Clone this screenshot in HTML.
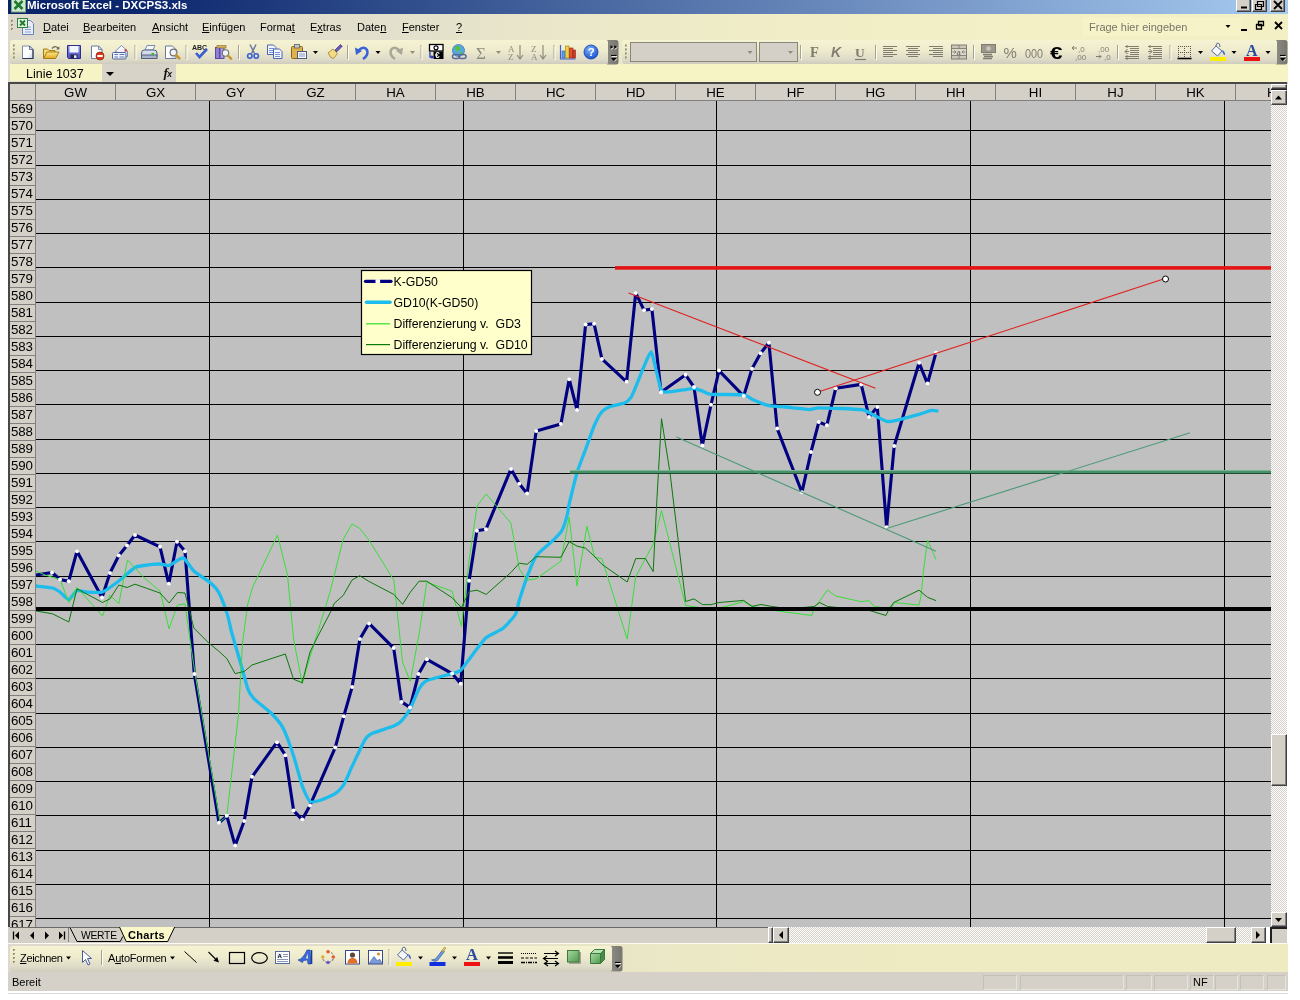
<!DOCTYPE html>
<html lang="de"><head><meta charset="utf-8"><title>Microsoft Excel - DXCPS3.xls</title>
<style>
html,body{margin:0;padding:0;background:#fff;}
body{width:1300px;height:1000px;position:relative;overflow:hidden;font-family:"Liberation Sans",Arial,sans-serif;font-size:11px;color:#000;}
#win{position:absolute;left:8px;top:0;width:1280px;height:992px;background:#d4d0c8;overflow:hidden;}
.abs{position:absolute;}
#title{position:absolute;left:8px;top:0;width:1280px;height:14px;background:linear-gradient(90deg,#0a246a 0%,#0c276d 10%,#a6caf0 100%);}
#title .t{position:absolute;left:19px;top:-1.500px;color:#fff;font-weight:bold;font-size:11.5px;white-space:nowrap;}
.tb{position:absolute;top:-3px;width:15px;height:15px;background:#d4d0c8;border:1px solid;border-color:#fff #404040 #404040 #fff;box-sizing:border-box;box-shadow:inset -1px -1px 0 #808080;}
#menubar{position:absolute;left:8px;top:14px;width:1280px;height:26px;background:linear-gradient(90deg,#dddacd 0%,#e2dfcd 28%,#edeac8 50%,#f2efc6 70%,#f3f0c5 100%);}
#menubar span{position:absolute;top:7px;font-size:11px;white-space:nowrap;}
#tbrow{position:absolute;left:8px;top:40px;width:1280px;height:24px;background:linear-gradient(90deg,#dddacd 0%,#e2dfcd 28%,#edeac8 50%,#f2efc6 70%,#f3f0c5 100%);}
.tbar{position:absolute;top:0px;height:24px;border-radius:3px 0 0 3px;background:linear-gradient(180deg,#f5f3d2 0%,#efecce 40%,#dedbc8 80%,#cfccbf 100%);}
#fbar{position:absolute;left:8px;top:64px;width:1280px;height:18px;background:#f6f3c4;}
#chrow{position:absolute;left:8px;top:82px;width:1279px;height:19px;background:#d4d0c8;border-top:2px solid #484848;box-sizing:border-box;}
.ch{position:absolute;top:84px;margin-left:1px;width:80px;height:17px;box-sizing:border-box;border-right:1px solid #808080;border-bottom:1px solid #808080;text-align:center;font-size:13.300px;line-height:17px;background:#d4d0c8;}
.rh{position:absolute;left:10px;width:26px;height:17px;box-sizing:border-box;border-right:1px solid #808080;border-bottom:1px solid #808080;font-size:13.300px;line-height:16px;text-align:left;padding-left:1px;background:#d4d0c8;overflow:hidden;letter-spacing:-0.200px;}
.dither{background-color:#e9e7e2;background-image:linear-gradient(45deg,#d4d0c8 25%,transparent 25%,transparent 75%,#d4d0c8 75%),linear-gradient(45deg,#d4d0c8 25%,#fff 25%,#fff 75%,#d4d0c8 75%);background-size:2px 2px;background-position:0 0,1px 1px;}
#vs{position:absolute;left:1271px;top:84px;width:15.500px;height:843px;}
.sbtn{position:absolute;background:#d4d0c8;border:1px solid;border-color:#fff #404040 #404040 #fff;box-sizing:border-box;box-shadow:inset -1px -1px 0 #808080;}
#tabrow{position:absolute;left:8px;top:927px;width:1280px;height:16px;background:#d4d0c8;}
#hs{position:absolute;left:789px;top:927px;width:462px;height:16px;}
#draw{position:absolute;left:8px;top:943px;width:1280px;height:29px;background:linear-gradient(90deg,#dddacd 0%,#e0ddcb 28%,#eae7c6 50%,#eeebc2 70%,#eeebc2 100%);border-top:1.500px solid #fdfcf4;box-sizing:border-box;}
#status{position:absolute;left:8px;top:972px;width:1280px;height:19px;background:#d5d1c8;}
.pn{position:absolute;top:3px;height:15px;box-sizing:border-box;border:1px solid;border-color:#c4c0b6 #e6e3dc #e6e3dc #c4c0b6;}
.tab{position:absolute;top:928px;height:15px;font-size:11px;line-height:15px;white-space:nowrap;}
</style></head><body>
<div id="root" style="position:absolute;left:0;top:0;width:1300px;height:1000px;will-change:transform">
<div id="win"></div>
<div id="title"><div class="t">Microsoft Excel - DXCPS3.xls</div>
<div class="tb" style="left:1228px"></div><div class="tb" style="left:1244px"></div><div class="tb" style="left:1262px"></div>
</div>
<div id="menubar">
<span style="left:35px"><u>D</u>atei</span><span style="left:75px"><u>B</u>earbeiten</span><span style="left:144px"><u>A</u>nsicht</span><span style="left:194px"><u>E</u>infügen</span><span style="left:252px">Forma<u>t</u></span><span style="left:302px">E<u>x</u>tras</span><span style="left:349px">Date<u>n</u></span><span style="left:394px"><u>F</u>enster</span><span style="left:448px"><u>?</u></span>
<div class="abs" style="left:1075px;top:3px;width:158px;height:19px;background:#f6f3c8"></div>
<span style="left:1081px;color:#77756a">Frage hier eingeben</span>
</div>
<div id="tbrow"><div class="tbar" style="left:2px;width:602px"></div><div class="tbar" style="left:614px;width:656px"></div></div>
<div id="fbar"><div class="abs" style="left:0;top:0;width:2px;height:18px;background:#dedbcc"></div><div class="abs" style="left:0;top:16.500px;width:168px;height:1.500px;background:#e2dfcc"></div><div class="abs" style="left:94px;top:0;width:74px;height:18px;background:#d7d3c9"></div><span class="abs" style="left:18px;top:2.500px;font-size:12.500px">Linie 1037</span></div>
<div id="chrow"></div>
<div class="ch" style="left:35px">GW</div><div class="ch" style="left:115px">GX</div><div class="ch" style="left:195px">GY</div><div class="ch" style="left:275px">GZ</div><div class="ch" style="left:355px">HA</div><div class="ch" style="left:435px">HB</div><div class="ch" style="left:515px">HC</div><div class="ch" style="left:595px">HD</div><div class="ch" style="left:675px">HE</div><div class="ch" style="left:755px">HF</div><div class="ch" style="left:835px">HG</div><div class="ch" style="left:915px">HH</div><div class="ch" style="left:995px">HI</div><div class="ch" style="left:1075px">HJ</div><div class="ch" style="left:1155px">HK</div><div class="ch" style="left:1235px">HL</div>
<div class="abs" style="left:9px;top:84px;width:27px;height:17px;background:#d4d0c8;border-right:1px solid #808080;border-bottom:1px solid #808080;box-sizing:border-box"></div>
<div class="rh" style="top:101px">569</div><div class="rh" style="top:118px">570</div><div class="rh" style="top:135px">571</div><div class="rh" style="top:152px">572</div><div class="rh" style="top:169px">573</div><div class="rh" style="top:186px">574</div><div class="rh" style="top:203px">575</div><div class="rh" style="top:220px">576</div><div class="rh" style="top:237px">577</div><div class="rh" style="top:254px">578</div><div class="rh" style="top:271px">579</div><div class="rh" style="top:288px">580</div><div class="rh" style="top:305px">581</div><div class="rh" style="top:322px">582</div><div class="rh" style="top:339px">583</div><div class="rh" style="top:356px">584</div><div class="rh" style="top:373px">585</div><div class="rh" style="top:390px">586</div><div class="rh" style="top:407px">587</div><div class="rh" style="top:424px">588</div><div class="rh" style="top:441px">589</div><div class="rh" style="top:458px">590</div><div class="rh" style="top:475px">591</div><div class="rh" style="top:492px">592</div><div class="rh" style="top:509px">593</div><div class="rh" style="top:526px">594</div><div class="rh" style="top:543px">595</div><div class="rh" style="top:560px">596</div><div class="rh" style="top:577px">597</div><div class="rh" style="top:594px">598</div><div class="rh" style="top:611px">599</div><div class="rh" style="top:628px">600</div><div class="rh" style="top:645px">601</div><div class="rh" style="top:662px">602</div><div class="rh" style="top:679px">603</div><div class="rh" style="top:696px">604</div><div class="rh" style="top:713px">605</div><div class="rh" style="top:730px">606</div><div class="rh" style="top:747px">607</div><div class="rh" style="top:764px">608</div><div class="rh" style="top:781px">609</div><div class="rh" style="top:798px">610</div><div class="rh" style="top:815px">611</div><div class="rh" style="top:832px">612</div><div class="rh" style="top:849px">613</div><div class="rh" style="top:866px">614</div><div class="rh" style="top:883px">615</div><div class="rh" style="top:900px">616</div><div class="rh" style="top:917px">617</div>
<div class="abs" style="left:8px;top:83px;width:2px;height:860px;background:#484848"></div>
<svg id="chart" width="1235" height="826" viewBox="36 101 1235 826" style="position:absolute;left:36px;top:101px" shape-rendering="auto">
<rect x="36" y="101" width="1235" height="826" fill="#c0c0c0"/>
<path d="M36 130.5H1271M36 165.5H1271M36 199.5H1271M36 233.5H1271M36 267.5H1271M36 302.5H1271M36 336.5H1271M36 370.5H1271M36 404.5H1271M36 439.5H1271M36 473.5H1271M36 507.5H1271M36 541.5H1271M36 576.5H1271M36 610.5H1271M36 644.5H1271M36 678.5H1271M36 713.5H1271M36 747.5H1271M36 781.5H1271M36 815.5H1271M36 850.5H1271M36 884.5H1271M36 918.5H1271M209.5 101V927M463.5 101V927M716.5 101V927M970.5 101V927M1224.5 101V927" stroke="#000" stroke-width="1" fill="none" shape-rendering="crispEdges"/>
<polyline points="36.0,575.0 52.0,572.5 60.0,579.5 68.8,581.2 77.0,551.2 102.0,597.5 110.0,573.0 118.8,555.5 127.0,545.5 135.0,535.0 160.0,546.8 168.8,583.8 177.0,541.8 185.0,551.2 194.3,674.1 219.0,822.8 226.8,815.8 235.1,845.6 244.2,821.0 252.0,776.8 277.0,742.2 285.3,755.2 293.6,810.6 302.2,819.6 310.0,805.4 335.2,747.6 343.8,716.2 352.1,687.1 359.9,639.0 369.0,623.4 393.7,648.1 401.5,701.9 410.0,707.4 418.6,674.1 426.9,659.3 452.2,673.6 460.7,683.7 469.1,580.7 476.9,530.8 486.0,529.2 511.0,468.9 519.3,483.7 527.1,493.6 536.2,431.0 560.9,424.1 569.2,379.2 577.0,409.9 585.6,324.6 594.1,323.8 601.9,358.9 626.6,381.8 635.7,292.9 644.1,310.3 651.9,309.0 661.0,392.2 685.6,374.8 694.0,387.0 702.3,445.5 711.0,404.7 719.0,370.6 743.7,396.1 752.0,368.8 760.6,353.2 768.9,342.8 777.2,428.6 801.9,492.3 811.0,452.0 818.8,422.1 826.9,425.2 835.7,388.3 861.2,384.4 869.0,416.9 877.3,407.0 886.6,527.3 894.2,446.0 919.1,362.8 927.5,383.6 936.0,352.7" fill="none" stroke="#000080" stroke-width="3.1" stroke-linejoin="round"/>
<path d="M36.0 586.0C37.6 586.2 50.1 587.4 52.5 588.0C54.9 588.6 58.4 590.9 60.0 592.0C61.6 593.1 67.0 599.6 68.8 599.5C70.5 599.4 75.3 591.2 77.0 590.5C78.7 589.8 83.2 591.9 85.8 592.0C88.3 592.1 99.2 593.1 102.5 592.0C105.8 590.9 115.5 583.5 118.8 581.0C122.0 578.5 132.5 569.0 135.0 567.5C137.5 566.0 141.2 565.9 143.8 565.5C146.2 565.1 157.5 564.0 160.0 564.0C162.5 564.0 167.1 565.8 168.8 565.5C170.4 565.2 175.5 561.5 177.0 560.8C178.5 560.0 182.1 557.0 183.8 558.0C185.4 559.0 191.1 568.5 193.8 571.0C196.4 573.5 207.5 580.4 210.0 582.5C212.5 584.6 217.0 589.2 218.8 592.5C220.5 595.8 226.2 610.9 227.5 615.0C228.8 619.1 230.6 628.8 232.0 633.8C233.4 638.8 239.5 659.4 241.1 665.0C242.7 670.6 246.8 686.3 248.1 689.7C249.4 693.1 251.8 696.5 254.1 698.8C256.4 701.1 268.1 710.1 271.0 713.0C273.9 715.9 280.4 723.1 282.7 727.4C285.0 731.7 291.7 750.1 293.6 756.0C295.6 761.9 300.6 781.4 302.2 785.9C303.8 790.4 308.2 800.1 310.0 801.5C311.8 802.9 317.9 801.0 320.4 800.2C322.9 799.4 332.9 795.3 335.2 793.7C337.5 792.1 342.1 787.3 343.8 784.6C345.5 781.9 350.0 770.8 352.1 766.4C354.2 762.0 362.7 743.6 364.6 740.4C366.5 737.1 368.1 735.3 371.0 733.9C373.9 732.5 390.6 727.4 393.7 726.1C396.8 724.8 399.9 722.6 401.5 720.9C403.1 719.2 408.3 712.3 410.0 709.2C411.7 706.1 416.9 692.6 418.6 689.7C420.3 686.8 423.5 682.2 426.9 680.6C430.3 679.0 448.8 674.6 452.2 673.6C455.6 672.6 459.1 671.6 460.7 670.2C462.3 668.8 466.1 663.2 468.6 660.0C471.1 656.8 482.6 640.9 486.0 637.8C489.4 634.7 499.5 631.1 502.4 628.8C505.3 626.5 513.7 617.4 515.4 614.5C517.1 611.6 518.1 604.0 519.3 600.2C520.5 596.4 525.4 581.2 527.1 576.8C528.8 572.4 533.5 559.8 536.2 556.0C538.9 552.2 551.8 541.7 554.4 539.1C557.0 536.5 560.9 532.5 562.2 530.0C563.5 527.5 566.7 517.0 567.4 514.4C568.1 511.8 568.2 508.2 569.2 504.0C570.2 499.8 575.4 478.3 577.0 472.8C578.6 467.3 583.9 454.1 585.6 449.4C587.3 444.7 592.5 429.8 594.1 426.0C595.7 422.2 600.3 413.6 601.9 411.7C603.5 409.8 608.0 407.4 610.3 406.5C612.6 405.6 622.5 404.0 624.6 403.1C626.7 402.2 629.9 399.0 631.0 397.4C632.1 395.8 634.4 390.1 635.7 387.0C637.0 383.9 642.6 369.7 644.1 366.2C645.6 362.7 649.9 351.6 651.1 351.9C652.3 352.2 654.8 365.0 655.8 368.8C656.8 372.6 660.0 387.3 661.0 389.6C662.0 391.9 663.7 392.2 666.2 392.2C668.7 392.2 682.8 390.0 685.6 389.6C688.4 389.2 692.4 388.2 694.0 388.3C695.6 388.4 700.3 390.3 702.0 390.9C703.7 391.5 706.9 393.9 711.1 394.3C715.3 394.7 739.6 394.3 743.7 394.8C747.8 395.3 749.5 398.1 752.0 399.2C754.5 400.3 765.5 404.9 768.9 405.7C772.3 406.5 781.8 406.6 785.8 407.0C789.8 407.4 805.8 409.5 809.2 409.6C812.6 409.7 814.4 407.8 819.6 407.8C824.8 407.8 856.3 409.1 861.2 409.6C866.1 410.1 867.4 411.7 869.0 412.4C870.6 413.1 875.5 416.0 877.3 416.9C879.1 417.8 884.9 420.9 886.6 421.3C888.3 421.7 891.0 421.5 894.2 420.8C897.5 420.1 915.4 415.3 919.1 414.3C922.8 413.3 929.6 410.7 931.4 410.4C933.2 410.1 936.4 410.8 937.0 410.9" fill="none" stroke="#1cbcec" stroke-width="3.3" stroke-linejoin="round" stroke-linecap="round"/>
<polyline points="36.0,571.0 45.0,575.0 60.0,579.5 68.8,602.5 77.0,587.5 102.5,616.0 110.0,595.0 118.8,603.8 127.5,560.0 143.8,577.5 160.0,591.0 169.0,628.8 177.5,605.0 185.0,603.8 190.0,640.0 195.3,675.0 220.0,822.0 226.8,816.0 230.7,782.0 238.5,714.4 242.4,644.2 247.5,605.0 252.5,587.5 277.5,535.0 287.5,575.0 293.6,639.0 302.2,683.7 310.0,657.0 330.0,592.2 343.2,539.4 352.0,524.0 359.7,528.4 368.5,539.4 393.8,580.1 402.6,662.6 410.3,681.3 419.1,634.0 426.8,582.3 452.1,591.1 461.4,626.3 469.1,560.0 477.0,506.0 486.2,494.0 510.9,523.0 519.3,569.0 527.1,580.1 536.2,578.8 560.9,561.2 569.2,517.0 577.0,585.9 586.9,526.1 594.7,557.3 601.9,558.6 627.2,639.1 635.7,576.8 645.4,558.6 653.2,544.3 661.5,510.5 685.6,605.4 702.5,608.0 719.4,608.0 726.0,606.4 743.7,601.7 752.0,606.4 778.0,611.0 811.8,615.5 814.4,607.7 819.6,601.2 827.4,590.0 835.7,596.0 861.2,601.7 869.0,600.6 874.2,606.4 886.0,608.0 892.4,606.4 894.2,602.5 919.1,605.1 921.0,596.0 923.6,570.0 927.5,540.0 936.0,559.6" fill="none" stroke="#3add3a" stroke-width="1"/>
<polyline points="36.0,611.0 52.5,613.8 68.8,622.0 77.0,588.8 102.5,602.5 110.0,598.8 118.8,585.0 127.0,587.5 135.0,584.2 160.0,593.0 169.2,603.0 177.5,592.5 185.0,593.0 193.8,628.0 208.6,642.9 218.8,651.2 226.8,658.5 235.1,673.6 244.2,671.5 252.0,665.0 285.3,654.0 293.6,679.3 302.2,682.7 310.0,652.0 317.8,636.4 330.0,613.1 334.4,603.2 343.2,595.5 352.0,580.1 359.7,575.7 368.5,581.2 393.8,594.4 402.6,604.3 410.3,592.2 419.1,581.2 426.8,581.2 452.1,597.7 461.4,607.6 469.1,591.5 477.0,590.2 486.2,594.4 510.9,572.5 519.3,563.2 527.1,564.3 536.2,556.7 560.9,557.3 569.2,541.7 577.0,546.1 585.6,548.2 594.1,556.0 601.9,564.3 627.2,582.0 635.7,558.6 645.4,558.6 653.2,571.6 657.0,497.5 661.5,418.7 670.0,472.8 685.6,601.5 694.0,598.9 702.5,604.6 711.1,604.6 719.0,602.5 743.7,600.4 752.0,606.4 761.0,604.5 771.5,606.4 790.0,609.0 814.4,606.4 819.6,602.5 827.4,606.4 850.0,609.0 869.0,610.3 885.9,615.5 888.5,610.3 893.7,602.5 919.1,590.2 927.5,597.3 936.0,600.6" fill="none" stroke="#0c780c" stroke-width="1"/>
<circle cx="52.0" cy="572.5" r="2" fill="#fff"/>
<circle cx="60.0" cy="579.5" r="2" fill="#fff"/>
<circle cx="68.8" cy="581.2" r="2" fill="#fff"/>
<circle cx="77.0" cy="551.2" r="2" fill="#fff"/>
<circle cx="102.0" cy="597.5" r="2" fill="#fff"/>
<circle cx="110.0" cy="573.0" r="2" fill="#fff"/>
<circle cx="118.8" cy="555.5" r="2" fill="#fff"/>
<circle cx="127.0" cy="545.5" r="2" fill="#fff"/>
<circle cx="135.0" cy="535.0" r="2" fill="#fff"/>
<circle cx="160.0" cy="546.8" r="2" fill="#fff"/>
<circle cx="168.8" cy="583.8" r="2" fill="#fff"/>
<circle cx="177.0" cy="541.8" r="2" fill="#fff"/>
<circle cx="185.0" cy="551.2" r="2" fill="#fff"/>
<circle cx="194.3" cy="674.1" r="2" fill="#fff"/>
<circle cx="219.0" cy="822.8" r="2" fill="#fff"/>
<circle cx="226.8" cy="815.8" r="2" fill="#fff"/>
<circle cx="235.1" cy="845.6" r="2" fill="#fff"/>
<circle cx="244.2" cy="821.0" r="2" fill="#fff"/>
<circle cx="252.0" cy="776.8" r="2" fill="#fff"/>
<circle cx="277.0" cy="742.2" r="2" fill="#fff"/>
<circle cx="285.3" cy="755.2" r="2" fill="#fff"/>
<circle cx="293.6" cy="810.6" r="2" fill="#fff"/>
<circle cx="302.2" cy="819.6" r="2" fill="#fff"/>
<circle cx="310.0" cy="805.4" r="2" fill="#fff"/>
<circle cx="335.2" cy="747.6" r="2" fill="#fff"/>
<circle cx="343.8" cy="716.2" r="2" fill="#fff"/>
<circle cx="352.1" cy="687.1" r="2" fill="#fff"/>
<circle cx="359.9" cy="639.0" r="2" fill="#fff"/>
<circle cx="369.0" cy="623.4" r="2" fill="#fff"/>
<circle cx="393.7" cy="648.1" r="2" fill="#fff"/>
<circle cx="401.5" cy="701.9" r="2" fill="#fff"/>
<circle cx="410.0" cy="707.4" r="2" fill="#fff"/>
<circle cx="418.6" cy="674.1" r="2" fill="#fff"/>
<circle cx="426.9" cy="659.3" r="2" fill="#fff"/>
<circle cx="452.2" cy="673.6" r="2" fill="#fff"/>
<circle cx="460.7" cy="683.7" r="2" fill="#fff"/>
<circle cx="469.1" cy="580.7" r="2" fill="#fff"/>
<circle cx="476.9" cy="530.8" r="2" fill="#fff"/>
<circle cx="486.0" cy="529.2" r="2" fill="#fff"/>
<circle cx="511.0" cy="468.9" r="2" fill="#fff"/>
<circle cx="519.3" cy="483.7" r="2" fill="#fff"/>
<circle cx="527.1" cy="493.6" r="2" fill="#fff"/>
<circle cx="536.2" cy="431.0" r="2" fill="#fff"/>
<circle cx="560.9" cy="424.1" r="2" fill="#fff"/>
<circle cx="569.2" cy="379.2" r="2" fill="#fff"/>
<circle cx="577.0" cy="409.9" r="2" fill="#fff"/>
<circle cx="585.6" cy="324.6" r="2" fill="#fff"/>
<circle cx="594.1" cy="323.8" r="2" fill="#fff"/>
<circle cx="601.9" cy="358.9" r="2" fill="#fff"/>
<circle cx="626.6" cy="381.8" r="2" fill="#fff"/>
<circle cx="635.7" cy="292.9" r="2" fill="#fff"/>
<circle cx="644.1" cy="310.3" r="2" fill="#fff"/>
<circle cx="651.9" cy="309.0" r="2" fill="#fff"/>
<circle cx="661.0" cy="392.2" r="2" fill="#fff"/>
<circle cx="685.6" cy="374.8" r="2" fill="#fff"/>
<circle cx="694.0" cy="387.0" r="2" fill="#fff"/>
<circle cx="702.3" cy="445.5" r="2" fill="#fff"/>
<circle cx="711.0" cy="404.7" r="2" fill="#fff"/>
<circle cx="719.0" cy="370.6" r="2" fill="#fff"/>
<circle cx="743.7" cy="396.1" r="2" fill="#fff"/>
<circle cx="752.0" cy="368.8" r="2" fill="#fff"/>
<circle cx="760.6" cy="353.2" r="2" fill="#fff"/>
<circle cx="768.9" cy="342.8" r="2" fill="#fff"/>
<circle cx="777.2" cy="428.6" r="2" fill="#fff"/>
<circle cx="801.9" cy="492.3" r="2" fill="#fff"/>
<circle cx="811.0" cy="452.0" r="2" fill="#fff"/>
<circle cx="818.8" cy="422.1" r="2" fill="#fff"/>
<circle cx="826.9" cy="425.2" r="2" fill="#fff"/>
<circle cx="835.7" cy="388.3" r="2" fill="#fff"/>
<circle cx="861.2" cy="384.4" r="2" fill="#fff"/>
<circle cx="869.0" cy="416.9" r="2" fill="#fff"/>
<circle cx="877.3" cy="407.0" r="2" fill="#fff"/>
<circle cx="886.6" cy="527.3" r="2" fill="#fff"/>
<circle cx="894.2" cy="446.0" r="2" fill="#fff"/>
<circle cx="919.1" cy="362.8" r="2" fill="#fff"/>
<circle cx="927.5" cy="383.6" r="2" fill="#fff"/>
<circle cx="936.0" cy="352.7" r="2" fill="#fff"/>
<rect x="36" y="607" width="1235" height="4" fill="#000"/>
<rect x="570" y="470.1" width="701" height="3" fill="#47916a"/><rect x="570" y="470.1" width="701" height="0.9" fill="#7fb898"/><rect x="570" y="473" width="701" height="1" fill="#1f4d31"/>
<rect x="615" y="266.1" width="656" height="3.6" fill="#e41414"/>
<path d="M628.5 292.9L875.5 388.3M817.2 392.2L1165 278.6" stroke="#e02020" stroke-width="1.1" fill="none"/>
<path d="M676.5 437.1L936 551.3M886.6 528.6L1190 432.8" stroke="#4d9a78" stroke-width="1.1" fill="none"/>
<circle cx="817.5" cy="392.3" r="3" fill="#fff" stroke="#000" stroke-width="1"/>
<circle cx="1165.5" cy="279" r="3" fill="#fff" stroke="#000" stroke-width="1"/>
<rect x="361.5" y="270.5" width="170" height="84" fill="#ffffcc" stroke="#000" stroke-width="1.2"/>
<path d="M365.5 281.3H391" stroke="#000080" stroke-width="3.2" stroke-linecap="round"/>
<rect x="375.5" y="279.3" width="4.6" height="4" fill="#fff"/>
<path d="M366.5 302.3H390" stroke="#1cbcec" stroke-width="3.6" stroke-linecap="round"/>
<path d="M366 323.8H390" stroke="#2ee02e" stroke-width="1.2"/>
<path d="M366 344.6H390" stroke="#0a7a0a" stroke-width="1.2"/>
<text x="393.5" y="285.6" font-family="Liberation Sans, Arial, sans-serif" font-size="12.3" fill="#000" xml:space="preserve">K-GD50</text>
<text x="393.5" y="306.6" font-family="Liberation Sans, Arial, sans-serif" font-size="12.3" fill="#000" xml:space="preserve">GD10(K-GD50)</text>
<text x="393.5" y="327.5" font-family="Liberation Sans, Arial, sans-serif" font-size="12.3" fill="#000" xml:space="preserve">Differenzierung v.  GD3</text>
<text x="393.5" y="348.5" font-family="Liberation Sans, Arial, sans-serif" font-size="12.3" fill="#000" xml:space="preserve">Differenzierung v.  GD10</text>
</svg>
<div id="vs" class="dither"></div>
<div class="sbtn" style="left:1271px;top:84px;width:15.500px;height:5px"></div><div class="abs" style="left:1271px;top:89px;width:15.500px;height:1px;background:#202020"></div>
<div class="sbtn" style="left:1271px;top:90px;width:15.500px;height:15px"></div>
<div class="sbtn" style="left:1271px;top:734px;width:15.500px;height:52px"></div>
<div class="sbtn" style="left:1271px;top:912px;width:15.500px;height:15px"></div>
<div id="tabrow"></div>
<div class="abs" style="left:68px;top:927px;width:1px;height:15px;background:#808080"></div>
<div class="abs" style="left:10px;top:927px;width:758px;height:1px;background:#6a6a66"></div>
<svg class="abs" style="left:68px;top:927px" width="112" height="16" viewBox="68 927 112 16"><path d="M70 927.500l7 14h43.300l2.500 -5" fill="#d4d0c8" stroke="#000" stroke-width="1"/><path d="M119.500 927l6.700 14.500h41.500l7 -14.500z" fill="#faf7c8" stroke="none"/><path d="M119.500 927l6.700 14.500h41.500l7 -14.500" fill="none" stroke="#000" stroke-width="1"/></svg>
<div class="tab" style="left:81px;font-size:10.300px;letter-spacing:-0.250px">WERTE</div><div class="tab" style="left:128px;font-weight:bold;letter-spacing:0.350px">Charts</div>
<div class="sbtn" style="left:768px;top:927px;width:5px;height:16px"></div>
<div class="sbtn" style="left:773px;top:927px;width:16px;height:16px"></div>
<div id="hs" class="dither"></div>
<div class="sbtn" style="left:1206px;top:927px;width:30px;height:16px"></div>
<div class="sbtn" style="left:1251px;top:927px;width:15px;height:16px"></div>
<div class="abs" style="left:1266px;top:927px;width:4px;height:16px;background:#fff"></div>
<div class="abs" style="left:1270px;top:927px;width:1.500px;height:16px;background:#202020"></div>
<div class="abs" style="left:1271px;top:927px;width:16px;height:1.500px;background:#202020"></div>
<div id="draw"><div class="tbar" style="left:2px;top:2px;width:602px;height:26px"></div>
<span class="abs" style="left:12px;top:8px;letter-spacing:-0.350px"><u>Z</u>eichnen</span><span class="abs" style="left:100px;top:8px;letter-spacing:-0.200px">A<u>u</u>toFormen</span></div>
<div id="status"><span class="abs" style="left:4px;top:4px">Bereit</span>
<div class="pn" style="left:975px;width:34px"></div><div class="pn" style="left:1011.5px;width:104px"></div><div class="pn" style="left:1118px;width:25.5px"></div><div class="pn" style="left:1146px;width:34px"></div><div class="pn" style="left:1181.5px;width:24px"></div><div class="pn" style="left:1207px;width:23px"></div><div class="pn" style="left:1232px;width:24px"></div><div class="pn" style="left:1259px;width:19px"></div>
<span class="abs" style="left:1185px;top:4px">NF</span></div>
<div class="abs" style="left:0;top:991px;width:1300px;height:9px;background:#fff"></div>
<div class="abs" style="left:8px;top:992.500px;width:1280px;height:1px;background:#dcdad4"></div>
<div class="abs" style="left:1288px;top:0;width:12px;height:1000px;background:#fff"></div>
<div class="abs" style="left:1286.500px;top:84px;width:2px;height:859px;background:#fff"></div>
<svg id="icons" width="1300" height="1000" viewBox="0 0 1300 1000" style="position:absolute;left:0;top:0;pointer-events:none"><defs><linearGradient id="gpage" x1="0" y1="0" x2="1" y2="1"><stop offset="0" stop-color="#fff"/><stop offset="0.6" stop-color="#fdfdff"/><stop offset="1" stop-color="#c4cde6"/></linearGradient><linearGradient id="gfold" x1="0" y1="0" x2="0" y2="1"><stop offset="0" stop-color="#ffe98a"/><stop offset="1" stop-color="#e3a721"/></linearGradient><linearGradient id="gblue" x1="0" y1="0" x2="0" y2="1"><stop offset="0" stop-color="#8a92e6"/><stop offset="1" stop-color="#4a50c0"/></linearGradient><linearGradient id="ggreen" x1="0" y1="0" x2="1" y2="1"><stop offset="0" stop-color="#a8d8a0"/><stop offset="1" stop-color="#4f9a4f"/></linearGradient><radialGradient id="ghelp" cx="0.4" cy="0.3" r="0.8"><stop offset="0" stop-color="#7fb0ff"/><stop offset="1" stop-color="#1048c8"/></radialGradient><linearGradient id="gopt" x1="0" y1="0" x2="1" y2="0"><stop offset="0" stop-color="#8c8c84"/><stop offset="1" stop-color="#76766e"/></linearGradient></defs><g transform="translate(11.5,1.0)"><rect x="0" y="-3" width="14" height="14" fill="#cfe8cf" stroke="#7aa87a"/><path d="M3 0l8 8M11 0l-8 8" stroke="#1f7a2f" stroke-width="2.6"/></g><path d="M1241 7.5h6" stroke="#000" stroke-width="2"/><path d="M1257.5 1.5h6v5h-6zM1255.5 4.5h6v5h-6z" fill="#d4d0c8" stroke="#000" stroke-width="1.2"/><path d="M1274 1l8 8M1282 1l-8 8" stroke="#000" stroke-width="1.8"/><g transform="translate(11.0,20.0)"><rect x="0" y="0" width="2" height="2" fill="#8f8962"/><rect x="1" y="1" width="1" height="1" fill="#fffbe0" opacity=".6"/><rect x="0" y="4" width="2" height="2" fill="#8f8962"/><rect x="1" y="5" width="1" height="1" fill="#fffbe0" opacity=".6"/><rect x="0" y="8" width="2" height="2" fill="#8f8962"/><rect x="1" y="9" width="1" height="1" fill="#fffbe0" opacity=".6"/></g><g transform="translate(17.0,17.0)"><path d="M5.5 3.5h8l3 3v11h-11z" fill="#e6ecfa" stroke="#6d83b8"/><path d="M8 10h6M8 12.5h6M8 15h6" stroke="#8ea2d2" stroke-width="1"/><rect x="0.5" y="1.500" width="10" height="9" fill="#e3f3e0" stroke="#2f7f3f"/><path d="M3 3.500l5 5M8 3.500l-5 5" stroke="#1f7a2f" stroke-width="1.8"/></g><path d="M1225.5 25.0h5l-2.5 3z" fill="#000"/><path d="M1241 30h6" stroke="#000" stroke-width="2"/><path d="M1258.500 21.500h5v4h-5zM1256.500 24.500h5v4.500h-5z" fill="#f3f0c4" stroke="#000" stroke-width="1.300"/><path d="M1275 22l7 7M1282 22l-7 7" stroke="#000" stroke-width="1.800"/><g transform="translate(13.0,44.5)"><rect x="0" y="0" width="2" height="2" fill="#8f8962"/><rect x="1" y="1" width="1" height="1" fill="#fffbe0" opacity=".6"/><rect x="0" y="4" width="2" height="2" fill="#8f8962"/><rect x="1" y="5" width="1" height="1" fill="#fffbe0" opacity=".6"/><rect x="0" y="8" width="2" height="2" fill="#8f8962"/><rect x="1" y="9" width="1" height="1" fill="#fffbe0" opacity=".6"/><rect x="0" y="12" width="2" height="2" fill="#8f8962"/><rect x="1" y="13" width="1" height="1" fill="#fffbe0" opacity=".6"/></g><g transform="translate(22.0,45.5)"><path d="M0.5 0.500h7l3.500 3.500v9h-10.500z" fill="url(#gpage)" stroke="#7a88a8"/><path d="M0.500 13h10.500v-9" fill="none" stroke="#2a3350" stroke-width="1.100"/><path d="M7.500 0.500v3.500h3.500z" fill="#dfe6f5" stroke="#4a5878" stroke-width=".8"/></g><g transform="translate(43.0,45.0)"><path d="M9 3.500q3 -3.500 6 -0.500" stroke="#6a6a5a" fill="none" stroke-width="1.200"/><path d="M16.300 1.200v3.300h-3.300z" fill="#6a6a5a"/><path d="M0.500 13.500v-9.500h4l1.500 1.500h6v2.500" fill="#f5d977" stroke="#a57a14"/><path d="M0.500 13.500l3.500 -6.500h12l-3.500 6.500z" fill="url(#gfold)" stroke="#a57a14"/></g><g transform="translate(67.0,45.0)"><path d="M0.500 0.500h13v13h-12l-1 -1z" fill="url(#gblue)" stroke="#2c2f8a"/><rect x="2.500" y="1" width="9" height="6.500" fill="#f4f6ff"/><rect x="3.500" y="9.500" width="7" height="4" fill="#26264e"/><rect x="7" y="10.300" width="2.500" height="2.700" fill="#e8e8f0"/></g><g transform="translate(91.0,45.5)"><path d="M0.500 0.500h7l3.500 3.500v9h-10.500z" fill="url(#gpage)" stroke="#6b7a9a"/><path d="M7.500 0.500v3.500h3.500z" fill="#dfe6f5" stroke="#6b7a9a" stroke-width=".8"/><circle cx="9" cy="10.500" r="4" fill="#d83a1c" stroke="#9a2410" stroke-width=".8"/><rect x="6.300" y="9.500" width="5.400" height="2" fill="#fff"/></g><g transform="translate(112.0,44.5)"><path d="M3.500 6.500l6 -5.500l6 5.500v5.500h-12z" fill="#f4f6fc" stroke="#7f8fb8"/><path d="M3.500 6.500l6 3.500l6 -3.500" fill="none" stroke="#9aa8c8" stroke-width=".8"/><rect x="12.500" y="4.800" width="2.200" height="2.200" fill="#d83030"/><rect x="0.500" y="8" width="13.500" height="6.500" rx="1" fill="#eef2fb" stroke="#4e6496"/><path d="M2.500 10h3.500M2.500 12.500h3.500M7.500 10h5M7.500 12.500h5" stroke="#5f78b4" stroke-width="1.100"/></g><path d="M135.0 45V59" stroke="#a6a28c" stroke-width="1"/><path d="M136.0 46V60" stroke="#fffef4" stroke-width="1"/><g transform="translate(141.0,45.0)"><path d="M4 5l2 -4.500h8l-2 4.500z" fill="#f5f7fc" stroke="#7d8aa8"/><path d="M0.500 8q0 -3 3 -3h9.500q3 0 3 3v4h-15.500z" fill="#d5dbea" stroke="#55607e"/><rect x="0.500" y="10" width="15.500" height="3.500" fill="#aab3cc" stroke="#55607e"/><rect x="10.500" y="8" width="2.500" height="2" fill="#25c025"/></g><g transform="translate(165.0,45.5)"><path d="M0.500 0.500h7l3.500 3.500v9h-10.500z" fill="url(#gpage)" stroke="#6b7a9a"/><circle cx="8.500" cy="7" r="3.400" fill="#eef3ff" fill-opacity=".85" stroke="#707070" stroke-width="1.200"/><path d="M11.200 9.800l3 3" stroke="#c8962e" stroke-width="2.800" stroke-linecap="round"/></g><path d="M186.0 45V59" stroke="#a6a28c" stroke-width="1"/><path d="M187.0 46V60" stroke="#fffef4" stroke-width="1"/><g transform="translate(192.0,43.0)"><text x="0" y="6.500" font-family="Liberation Sans,Arial,sans-serif" font-size="7" font-weight="bold" fill="#222" textLength="15">ABC</text><path d="M4 10l3.500 4l7.500 -8" stroke="#3a5fd0" stroke-width="2.600" fill="none"/></g><g transform="translate(215.0,45.0)"><rect x="0.500" y="2.500" width="4" height="11" fill="#8f7fd8" stroke="#5a4aa0"/><rect x="5" y="1.500" width="4" height="12" fill="#a79be6" stroke="#5a4aa0"/><rect x="2" y="0.500" width="9" height="2.500" fill="#d8b060" stroke="#8a6a20" stroke-width=".6"/><circle cx="10.500" cy="8" r="3.200" fill="#eef4ff" stroke="#707070" stroke-width="1.100"/><path d="M13 10.700l3 3" stroke="#c8962e" stroke-width="2.600" stroke-linecap="round"/></g><path d="M238.5 45V59" stroke="#a6a28c" stroke-width="1"/><path d="M239.5 46V60" stroke="#fffef4" stroke-width="1"/><g transform="translate(247.0,44.5)"><path d="M3 0l4.500 9M9 0l-4.500 9" stroke="#6a7a9a" stroke-width="1.500"/><circle cx="2.800" cy="11.500" r="2.200" fill="none" stroke="#3a5fd0" stroke-width="1.600"/><circle cx="9.200" cy="11.500" r="2.200" fill="none" stroke="#3a5fd0" stroke-width="1.600"/></g><g transform="translate(267.0,44.5)"><path d="M0.500 0.500h6l2.500 2.500v7h-8.500z" fill="#f4f7ff" stroke="#4a64b0"/><path d="M2 4h5M2 6h5M2 8h5" stroke="#6a84d0" stroke-width=".9"/><path d="M6.500 4.500h6l2.500 2.500v7h-8.500z" fill="#f4f7ff" stroke="#4a64b0"/><path d="M8 8h5M8 10h5M8 12h5" stroke="#6a84d0" stroke-width=".9"/></g><g transform="translate(291.0,44.0)"><rect x="0.500" y="2.500" width="11" height="12" rx="1" fill="#e0b24a" stroke="#8a6518"/><rect x="3.500" y="0.500" width="5" height="3.500" fill="#c8c8c8" stroke="#606060" stroke-width=".8"/><rect x="6.500" y="7.500" width="9" height="7" fill="#f4f7ff" stroke="#4a5a80"/><path d="M8 10h6M8 12h6" stroke="#7a8ab0" stroke-width=".9"/></g><path d="M313.0 51.0h5l-2.5 3z" fill="#000"/><g transform="translate(326.0,44.0)"><path d="M9 6l5.500 -5.500l1.800 1.800l-5.500 5.500z" fill="#6a5ab8" stroke="#3a2a80" stroke-width=".7"/><path d="M2 9l5 -4l4.500 4.500l-4 5q-3 0 -5.500 -5.500z" fill="#f2dc86" stroke="#a08830" stroke-width=".9"/></g><path d="M347.5 45V59" stroke="#a6a28c" stroke-width="1"/><path d="M348.5 46V60" stroke="#fffef4" stroke-width="1"/><g transform="translate(355.0,45.0)"><path d="M3 6q6 -6 9 -1q2 5 -4 9" stroke="#3a62d8" stroke-width="2.600" fill="none"/><path d="M0 2.500l1 7.500l6 -4z" fill="#3a62d8"/></g><path d="M375.5 51.0h5l-2.5 3z" fill="#000"/><g transform="translate(389.0,45.0)"><path d="M11 6q-6 -6 -9 -1q-2 5 4 9" stroke="#aaa798" stroke-width="2.600" fill="none"/><path d="M14 2.500l-1 7.500l-6 -4z" fill="#aaa798"/></g><path d="M410.0 51.0h5l-2.5 3z" fill="#8f8c7e"/><path d="M421.0 45V59" stroke="#a6a28c" stroke-width="1"/><path d="M422.0 46V60" stroke="#fffef4" stroke-width="1"/><g transform="translate(428.0,44.0)"><rect x="1.500" y="0.500" width="13.500" height="6.500" fill="#fff" stroke="#000" stroke-width="1.300"/><circle cx="8" cy="3.800" r="2" fill="none" stroke="#000" stroke-width="1.200"/><rect x="5.500" y="7.500" width="10" height="7.500" fill="#000"/><text x="7" y="14.300" font-family="Liberation Sans,Arial,sans-serif" font-size="8.500" font-weight="bold" fill="#fff">€</text><path d="M2 8v5h2" stroke="#2030c0" stroke-width="1.300" fill="none"/><path d="M3.500 11l2.500 2l-2.500 2z" fill="#2030c0"/></g><g transform="translate(451.0,44.0)"><circle cx="7.500" cy="6.500" r="6" fill="#58a8e0" stroke="#3a78b8" stroke-width=".8"/><path d="M4 3q3 -2 5 0q1 3 -2 4q-3 1 -3 -4z" fill="#58c040"/><path d="M9 8q3 0 3 2l-3 1z" fill="#58c040"/><rect x="1.500" y="10.500" width="7" height="4" rx="2" fill="none" stroke="#5a6a9a" stroke-width="1.500"/><rect x="8" y="10.500" width="7" height="4" rx="2" fill="none" stroke="#5a6a9a" stroke-width="1.500"/></g><text x="476" y="58.500" font-family="Liberation Serif,serif" font-size="17" fill="#8f8c7e">Σ</text><path d="M496.0 51.0h5l-2.5 3z" fill="#8f8c7e"/><text x="508" y="51.500" font-family="Liberation Serif,serif" font-size="9" fill="#8f8c7e">A</text><text x="508" y="60" font-family="Liberation Serif,serif" font-size="9" fill="#8f8c7e">Z</text><path d="M520 45v13M517 55l3 4l3 -4" stroke="#8f8c7e" stroke-width="1.200" fill="none"/><text x="531" y="51.500" font-family="Liberation Serif,serif" font-size="9" fill="#8f8c7e">Z</text><text x="531" y="60" font-family="Liberation Serif,serif" font-size="9" fill="#8f8c7e">A</text><path d="M543 45v13M540 55l3 4l3 -4" stroke="#8f8c7e" stroke-width="1.200" fill="none"/><path d="M554.0 45V59" stroke="#a6a28c" stroke-width="1"/><path d="M555.0 46V60" stroke="#fffef4" stroke-width="1"/><g transform="translate(560.0,44.0)"><path d="M0.500 1v14h15" stroke="#3a62d8" stroke-width="1.200" fill="none"/><rect x="2" y="7" width="3" height="7" fill="#58a0f0" stroke="#2a60b0" stroke-width=".6"/><rect x="5.500" y="2" width="3.500" height="12" fill="#f0d040" stroke="#a08010" stroke-width=".6"/><rect x="9.500" y="4" width="3.500" height="10" fill="#e05030" stroke="#902010" stroke-width=".6"/><rect x="13" y="6" width="2.500" height="8" fill="#d04028" stroke="#902010" stroke-width=".6"/></g><g transform="translate(584.0,45.0)"><circle cx="7" cy="7" r="7" fill="url(#ghelp)" stroke="#0a3aa8" stroke-width=".8"/><text x="3.800" y="11.300" font-family="Liberation Sans,Arial,sans-serif" font-size="11.500" font-weight="bold" fill="#fff">?</text></g><path d="M606.5 40.0h9.500q2.500 0 2.500 2.500v19.5q0 2.500 -2.500 2.500h-9.500q1.500 -0.500 1.500 -2v-20.5q0 -1.500 -1.500 -2z" fill="url(#gopt)"/><path d="M610.5 45.2l2.600 1.800l-2.600 1.800zM614.3 45.2l2.600 1.800l-2.600 1.800z" fill="#000"/><path d="M611.0 49.4l2.600 -1.800M614.8 49.4l2.600 -1.800" stroke="#fff" stroke-width=".8" fill="none"/><path d="M611.5 56.5h5.500" stroke="#fff" stroke-width="1"/><path d="M611.0 55.5h5.500" stroke="#000" stroke-width="1.200"/><path d="M611.0 58.0h5.500l-2.750 3z" fill="#000"/><path d="M614.5 61.3l2.400 -2.600" stroke="#fff" stroke-width=".8"/><g transform="translate(625.0,44.5)"><rect x="0" y="0" width="2" height="2" fill="#8f8962"/><rect x="1" y="1" width="1" height="1" fill="#fffbe0" opacity=".6"/><rect x="0" y="4" width="2" height="2" fill="#8f8962"/><rect x="1" y="5" width="1" height="1" fill="#fffbe0" opacity=".6"/><rect x="0" y="8" width="2" height="2" fill="#8f8962"/><rect x="1" y="9" width="1" height="1" fill="#fffbe0" opacity=".6"/><rect x="0" y="12" width="2" height="2" fill="#8f8962"/><rect x="1" y="13" width="1" height="1" fill="#fffbe0" opacity=".6"/></g><rect x="630.500" y="42.500" width="126" height="19" fill="#d4d0c8" stroke="#8a8778"/><path d="M747.5 51.0h5l-2.5 3z" fill="#8f8c7e"/><rect x="759.500" y="42.500" width="38" height="19" fill="#d4d0c8" stroke="#8a8778"/><path d="M788.0 51.0h5l-2.5 3z" fill="#8f8c7e"/><path d="M800.5 45V59" stroke="#a6a28c" stroke-width="1"/><path d="M801.5 46V60" stroke="#fffef4" stroke-width="1"/><text x="810" y="57" font-family="Liberation Serif,serif" font-size="14.500" font-weight="bold" fill="#807d70">F</text><text x="831" y="57" font-family="Liberation Sans,Arial,sans-serif" font-size="14" font-weight="bold" font-style="italic" fill="#807d70">K</text><text x="855" y="56.500" font-family="Liberation Serif,serif" font-size="13.500" font-weight="bold" fill="#807d70">U</text><path d="M855 59.500h11" stroke="#807d70" stroke-width="1.200"/><path d="M875.5 45V59" stroke="#a6a28c" stroke-width="1"/><path d="M876.5 46V60" stroke="#fffef4" stroke-width="1"/><path d="M883.0 46.5h14M883.0 48.5h10M883.0 50.5h14M883.0 52.5h10M883.0 54.5h14M883.0 56.5h10" stroke="#807d70" stroke-width="1.100"/><path d="M906.0 46.5h14M908.0 48.5h10M906.0 50.5h14M908.0 52.5h10M906.0 54.5h14M908.0 56.5h10" stroke="#807d70" stroke-width="1.100"/><path d="M929.0 46.5h14M933.0 48.5h10M929.0 50.5h14M933.0 52.5h10M929.0 54.5h14M933.0 56.5h10" stroke="#807d70" stroke-width="1.100"/><g transform="translate(951.0,44.5)"><rect x="0.500" y="0.500" width="15" height="14" fill="#c9c6ba" stroke="#807d70"/><rect x="1" y="4.500" width="14" height="6" fill="#dcd9cc"/><path d="M0.500 4h15M0.500 11h15M8 0.500v3.500M8 11v3.500" stroke="#807d70" stroke-width=".9"/><text x="5.600" y="10.300" font-family="Liberation Serif,serif" font-size="8.500" font-weight="bold" fill="#807d70">a</text><path d="M1.500 7.500h3.500M11 7.500h3.500M3.500 6l1.500 1.500l-1.500 1.500M12.500 6l-1.500 1.500l1.500 1.500" stroke="#807d70" stroke-width=".9" fill="none"/></g><path d="M973.5 45V59" stroke="#a6a28c" stroke-width="1"/><path d="M974.5 46V60" stroke="#fffef4" stroke-width="1"/><g transform="translate(980.0,44.0)"><rect x="1.500" y="0.500" width="14" height="8" fill="#9c998c" stroke="#807d70"/><circle cx="8.500" cy="4.500" r="2.300" fill="#c9c6ba"/><path d="M3 10.500h9M4 12.500h9M3 14.500h9" stroke="#807d70" stroke-width="1.300"/></g><text x="1003.500" y="57.500" font-family="Liberation Sans,Arial,sans-serif" font-size="15" fill="#807d70">%</text><text x="1025" y="57.500" font-family="Liberation Sans,Arial,sans-serif" font-size="12.500" fill="#807d70" textLength="18" lengthAdjust="spacingAndGlyphs">000</text><text x="1050" y="58.500" font-family="Liberation Sans,Arial,sans-serif" font-size="16.500" font-weight="bold" fill="#000" textLength="12.500" lengthAdjust="spacingAndGlyphs">€</text><text x="1078" y="51.500" font-family="Liberation Sans,Arial,sans-serif" font-size="8" fill="#807d70">,0</text><text x="1075" y="60" font-family="Liberation Sans,Arial,sans-serif" font-size="8" fill="#807d70">,00</text><path d="M1077 48h-5M1074 46l-2 2l2 2" stroke="#807d70" stroke-width="1" fill="none"/><text x="1098" y="51.500" font-family="Liberation Sans,Arial,sans-serif" font-size="8" fill="#807d70">,00</text><text x="1104" y="60" font-family="Liberation Sans,Arial,sans-serif" font-size="8" fill="#807d70">,0</text><path d="M1096 56.500h5M1099 54.500l2 2l-2 2" stroke="#807d70" stroke-width="1" fill="none"/><path d="M1117.5 45V59" stroke="#a6a28c" stroke-width="1"/><path d="M1118.5 46V60" stroke="#fffef4" stroke-width="1"/><path d="M1125 46.5h14M1130 48.5h9M1130 50.5h9M1130 52.5h9M1130 54.5h9M1125 56.5h14M1125 58.5h14" stroke="#807d70" stroke-width="1"/><path d="M1129 51.500h-4M1127 49.500l-2 2l2 2" stroke="#807d70" fill="none"/><path d="M1127 45v16" stroke="#807d70" stroke-width="1" stroke-dasharray="1 1"/><path d="M1148 46.5h14M1153 48.5h9M1153 50.5h9M1153 52.5h9M1153 54.5h9M1148 56.5h14M1148 58.5h14" stroke="#807d70" stroke-width="1"/><path d="M1148 51.500h4M1150 49.500l2 2l-2 2" stroke="#807d70" fill="none"/><path d="M1150 45v16" stroke="#807d70" stroke-width="1" stroke-dasharray="1 1"/><path d="M1170.0 45V59" stroke="#a6a28c" stroke-width="1"/><path d="M1171.0 46V60" stroke="#fffef4" stroke-width="1"/><path d="M1178 46.500h13M1178 52.500h13M1178.500 46v12M1184.500 46v12M1190.500 46v12" stroke="#55534a" stroke-width="1" stroke-dasharray="1 1"/><path d="M1177.500 58.500h14" stroke="#000" stroke-width="1.600"/><path d="M1198.0 51.0h5l-2.5 3z" fill="#000"/><g transform="translate(1210.0,43.0)"><path d="M6 3l6 5l-4.500 5l-6 -5z" fill="#f4f8ff" stroke="#5a6a98" stroke-width="1"/><path d="M6 3q0 -3 2 -3q2 0 2 4" stroke="#5a6a98" fill="none"/><path d="M12 7q3 1 3 5q-2 0 -3 -5z" fill="#3a62d8"/><rect x="0" y="14" width="16" height="4" fill="#ffee00"/></g><path d="M1231.5 51.0h5l-2.5 3z" fill="#000"/><g transform="translate(1244.0,43.0)"><text x="2" y="12.500" font-family="Liberation Serif,serif" font-size="16" font-weight="bold" fill="#2a4aa0">A</text><rect x="0" y="14" width="16" height="4" fill="#ee1111"/></g><path d="M1265.5 51.0h5l-2.5 3z" fill="#000"/><path d="M1275.5 40.0h9.500q2.500 0 2.500 2.500v19.5q0 2.500 -2.500 2.500h-9.500q1.500 -0.500 1.500 -2v-20.5q0 -1.500 -1.500 -2z" fill="url(#gopt)"/><path d="M1280.5 56.5h5.500" stroke="#fff" stroke-width="1"/><path d="M1280.0 55.5h5.500" stroke="#000" stroke-width="1.200"/><path d="M1280.0 58.0h5.500l-2.750 3z" fill="#000"/><path d="M1283.5 61.3l2.400 -2.600" stroke="#fff" stroke-width=".8"/><path d="M106 72h8l-4 4z" fill="#000"/><text x="163.500" y="77.300" font-family="Liberation Serif,serif" font-size="13.500" font-style="italic" font-weight="bold" fill="#111">f</text><text x="167.300" y="77.300" font-family="Liberation Sans,Arial,sans-serif" font-size="8.500" font-style="italic" font-weight="bold" fill="#111">x</text><path d="M1275 99.500h7l-3.500 -4z" fill="#000"/><path d="M1275 918h7l-3.500 4z" fill="#000"/><path d="M783 931v8l-4 -4z" fill="#000"/><path d="M1256 931v8l4 -4z" fill="#000"/><path d="M13.500 931.500v8" stroke="#000" stroke-width="1.300"/><path d="M19 931.500v8l-4 -4z" fill="#000"/><path d="M34 931.500v8l-4 -4z" fill="#000"/><path d="M45 931.500v8l4 -4z" fill="#000"/><path d="M59 931.500v8l4 -4z" fill="#000"/><path d="M64.500 931.500v8" stroke="#000" stroke-width="1.300"/><g transform="translate(13.0,949.0)"><rect x="0" y="0" width="2" height="2" fill="#8f8962"/><rect x="1" y="1" width="1" height="1" fill="#fffbe0" opacity=".6"/><rect x="0" y="4" width="2" height="2" fill="#8f8962"/><rect x="1" y="5" width="1" height="1" fill="#fffbe0" opacity=".6"/><rect x="0" y="8" width="2" height="2" fill="#8f8962"/><rect x="1" y="9" width="1" height="1" fill="#fffbe0" opacity=".6"/><rect x="0" y="12" width="2" height="2" fill="#8f8962"/><rect x="1" y="13" width="1" height="1" fill="#fffbe0" opacity=".6"/></g><path d="M66.0 956.5h5l-2.5 3z" fill="#000"/><g transform="translate(81.0,950.0)"><path d="M1.500 0.500v12l3 -3l2.500 5.500l2 -1l-2.500 -5.500h4z" fill="#fff" stroke="#4a5a9a" stroke-width="1"/></g><path d="M101.5 950V965" stroke="#a6a28c" stroke-width="1"/><path d="M102.5 951V966" stroke="#fffef4" stroke-width="1"/><path d="M170.0 956.5h5l-2.5 3z" fill="#000"/><path d="M184.500 951.500l12 11" stroke="#000" stroke-width="1"/><path d="M208.500 952l8 8" stroke="#000" stroke-width="1.100"/><path d="M219 962.500l-5.500 -1.800l3.700 -3.700z" fill="#000"/><rect x="229.500" y="952.500" width="15" height="11" fill="none" stroke="#000" stroke-width="1.200"/><ellipse cx="259.500" cy="958" rx="7.800" ry="5.400" fill="none" stroke="#000" stroke-width="1.200"/><g transform="translate(275.0,951.0)"><rect x="0.500" y="0.500" width="14" height="12" fill="#fff" stroke="#5a6a98"/><rect x="2" y="2" width="5" height="5" fill="#e6ecfa"/><text x="2.500" y="6.800" font-family="Liberation Sans,Arial,sans-serif" font-size="6" font-weight="bold" fill="#000">A</text><path d="M8 3.500h5M8 5.500h5M2 8.500h11M2 10.500h11" stroke="#7a8ab0" stroke-width=".9"/></g><g transform="translate(298.0,949.0)"><path d="M0 11q5 -1 9 -10l3 0l1 14l-3 0l-.5 -4l-4 .5l-1 2z" fill="#3a6ad8" stroke="#1a3a98" stroke-width=".6"/><path d="M8 9.500l1.500 -5l.5 5z" fill="#efecc2"/><path d="M13.500 1v14" stroke="#1a3a98" stroke-width="1.600"/></g><g transform="translate(321.0,950.0)"><path d="M7 1.500a5.500 5.500 0 1 1 -5.500 5.500" fill="none" stroke="#5a5a5a" stroke-width="1" stroke-dasharray="2 1.500"/><circle cx="7" cy="1.800" r="1.800" fill="#e06030"/><circle cx="12.300" cy="7" r="1.800" fill="#e06030"/><circle cx="7" cy="12.500" r="1.800" fill="#6a5ac8"/><circle cx="1.800" cy="7" r="1.800" fill="#e0b030"/></g><g transform="translate(345.0,950.0)"><rect x="0.500" y="0.500" width="14" height="13.500" fill="#fff" stroke="#3a4a88"/><circle cx="7.500" cy="5" r="2.600" fill="#5a4a3a"/><path d="M2.500 13.500q0 -5.500 5 -5.500q5 0 5 5.500z" fill="#e0702a"/></g><g transform="translate(368.0,950.0)"><rect x="0.500" y="0.500" width="14" height="13.500" fill="#fff" stroke="#3a4a88"/><circle cx="10.500" cy="4" r="1.600" fill="#e08a2a"/><path d="M1 13.500l5 -7l3.500 4.500l2 -2l3 4.500z" fill="#7a9ad8" stroke="#3a5a98" stroke-width=".6"/></g><path d="M389.0 949V965" stroke="#a6a28c" stroke-width="1"/><path d="M390.0 950V966" stroke="#fffef4" stroke-width="1"/><g transform="translate(396.0,947.0)"><path d="M6 3l6 5l-4.500 5l-6 -5z" fill="#f4f8ff" stroke="#5a6a98" stroke-width="1"/><path d="M6 3q0 -3 2 -3q2 0 2 4" stroke="#5a6a98" fill="none"/><path d="M12 7q3 1 3 5q-2 0 -3 -5z" fill="#3a62d8"/><rect x="0" y="15" width="16" height="4" fill="#ffee00"/></g><path d="M418.0 956.5h5l-2.5 3z" fill="#000"/><g transform="translate(429.5,947.0)"><path d="M2 13l4 -1l7 -9l2 1.500l-7 9q-3 2 -6 -.500z" fill="#6a9ae0" stroke="#3a5a98" stroke-width=".7"/><path d="M12 4l3 -4l1.500 1l-3 4z" fill="#e0c060" stroke="#a08030" stroke-width=".5"/><rect x="0" y="15" width="16" height="4" fill="#1030e0"/></g><path d="M452.0 956.5h5l-2.5 3z" fill="#000"/><g transform="translate(464.0,947.0)"><text x="2" y="13" font-family="Liberation Serif,serif" font-size="16.500" font-weight="bold" fill="#2a4aa0">A</text><rect x="0" y="15" width="16" height="4" fill="#ee1111"/></g><path d="M486.0 956.5h5l-2.5 3z" fill="#000"/><path d="M498 953h15" stroke="#000" stroke-width="1.400"/><path d="M498 957.500h15" stroke="#000" stroke-width="2.600"/><path d="M498 962.500h15" stroke="#000" stroke-width="3"/><path d="M521 953.500h16" stroke="#000" stroke-width="1" stroke-dasharray="1 1"/><path d="M521 958h16" stroke="#000" stroke-width="1.200" stroke-dasharray="3 1.500"/><path d="M521 962.500h16" stroke="#000" stroke-width="1.400" stroke-dasharray="4 1 1 1"/><path d="M544 953.500h14M555 951l3.500 2.500l-3.500 2.500M544 958.500h14M547 956l-3.500 2.500l3.500 2.500M545 963.500h13M548 961l-3.500 2.500l3.500 2.500M555 961l3.500 2.500l-3.500 2.500" stroke="#000" stroke-width="1.200" fill="none"/><g transform="translate(567.0,950.0)"><rect x="2" y="2" width="12" height="12" fill="#8a8a80" opacity=".7"/><rect x="0.500" y="0.500" width="11.500" height="11.500" fill="url(#ggreen)" stroke="#3a7a3a"/></g><g transform="translate(590.0,949.0)"><path d="M0.500 4.500h10v10h-10z" fill="url(#ggreen)" stroke="#3a7a3a"/><path d="M0.500 4.500l4 -4h10l-4 4z" fill="#b8e0b0" stroke="#3a7a3a"/><path d="M10.500 4.500l4 -4v10l-4 4z" fill="#4a8a4a" stroke="#3a7a3a"/></g><path d="M610.5 946.0h9.500q2.500 0 2.500 2.500v20.5q0 2.500 -2.500 2.500h-9.500q1.500 -0.500 1.500 -2v-21.5q0 -1.500 -1.500 -2z" fill="url(#gopt)"/><path d="M615.5 963.5h5.500" stroke="#fff" stroke-width="1"/><path d="M615.0 962.5h5.500" stroke="#000" stroke-width="1.200"/><path d="M615.0 965.0h5.500l-2.750 3z" fill="#000"/><path d="M618.5 968.3l2.400 -2.600" stroke="#fff" stroke-width=".8"/></svg>
</div>
</body></html>
